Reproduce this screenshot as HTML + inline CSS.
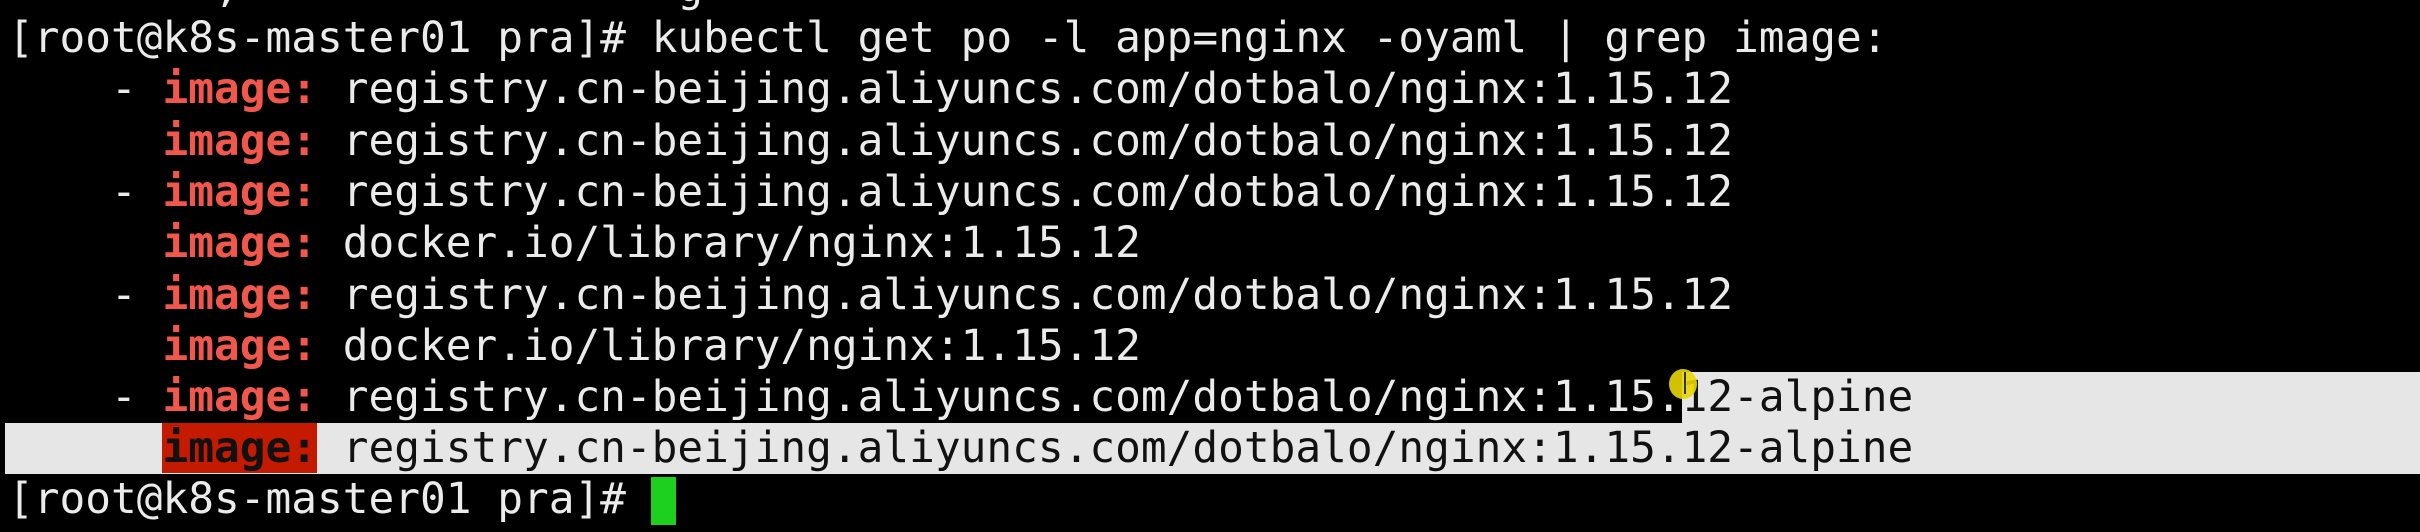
<!DOCTYPE html>
<html><head><meta charset="utf-8"><style>
html,body{margin:0;padding:0;background:#000;width:2420px;height:532px;overflow:hidden;position:relative}
.r{position:absolute;left:8px;height:51.3px;line-height:51.3px;font-family:"DejaVu Sans Mono","Liberation Mono",monospace;font-size:42.77px;color:#ebebeb;white-space:pre}
.k{color:#f2574b;font-weight:bold}
.sel{position:absolute;background:#e6e6e6}
.b{color:#111}
.kr{background:#c41a00;color:#111;font-weight:bold}
</style></head><body>
<div class="sel" style="left:1682px;top:372px;width:738px;height:51px"></div>
<div class="sel" style="left:5px;top:423px;width:2415px;height:51px"></div>
<div class="r" style="top:-38px">        ,                 g</div>
<div class="r" style="top:13px">[root@k8s-master01 pra]# kubectl get po -l app=nginx -oyaml | grep image:</div>
<div class="r" style="top:64.3px">    - <span class="k">image:</span> registry.cn-beijing.aliyuncs.com/dotbalo/nginx:1.15.12</div>
<div class="r" style="top:115.6px">      <span class="k">image:</span> registry.cn-beijing.aliyuncs.com/dotbalo/nginx:1.15.12</div>
<div class="r" style="top:166.9px">    - <span class="k">image:</span> registry.cn-beijing.aliyuncs.com/dotbalo/nginx:1.15.12</div>
<div class="r" style="top:218.2px">      <span class="k">image:</span> docker.io/library/nginx:1.15.12</div>
<div class="r" style="top:269.5px">    - <span class="k">image:</span> registry.cn-beijing.aliyuncs.com/dotbalo/nginx:1.15.12</div>
<div class="r" style="top:320.8px">      <span class="k">image:</span> docker.io/library/nginx:1.15.12</div>
<div class="r" style="top:372px">    - <span class="k">image:</span> registry.cn-beijing.aliyuncs.com/dotbalo/nginx:1.15.<span class="b">12-alpine</span></div>
<div class="r b" style="top:423px">      <span class="kr">image:</span> registry.cn-beijing.aliyuncs.com/dotbalo/nginx:1.15.12-alpine</div>
<div class="r" style="top:474px">[root@k8s-master01 pra]# </div>
<div style="position:absolute;left:651px;top:477px;width:25px;height:48px;background:#1ed01e"></div>
<div style="position:absolute;left:1669px;top:369px;width:28px;height:30px;border-radius:50%;background:#e8d600;opacity:.9"></div>
<div style="position:absolute;left:1684px;top:372px;width:2px;height:22px;background:#333"></div>
</body></html>
